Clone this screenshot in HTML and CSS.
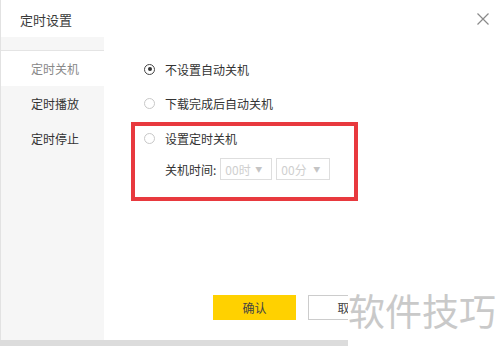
FILE: index.html
```html
<!DOCTYPE html>
<html lang="zh">
<head>
<meta charset="utf-8">
<link rel="stylesheet" href="styles.css">
</head>
<body>
<div class="dialog">
  <div class="header">
    <span class="title">定时设置</span>
    <svg class="close" width="12" height="12" viewBox="0 0 12 12"><path d="M0.5 0.5L11.5 11.5M11.5 0.5L0.5 11.5" stroke="#8a8a8a" stroke-width="1.2" fill="none"/></svg>
  </div>
  <div class="main">
    <div class="sidebar">
      <div class="nav">
        <div class="nav-item active">定时关机</div>
        <div class="nav-item">定时播放</div>
        <div class="nav-item">定时停止</div>
      </div>
    </div>
    <div class="content">
      <div class="option"><span class="radio checked"></span><span>不设置自动关机</span></div>
      <div class="option second"><span class="radio"></span><span>下载完成后自动关机</span></div>
      <div class="highlight">
        <div class="option"><span class="radio"></span><span>设置定时关机</span></div>
        <div class="time-row">
          <span class="label">关机时间:</span>
          <span class="select s1"><span>00时</span><span class="arrow">▼</span></span>
          <span class="select s2"><span>00分</span><span class="arrow">▼</span></span>
        </div>
      </div>
      <div class="footer">
        <button class="btn confirm">确认</button>
        <button class="btn cancel">取消</button>
      </div>
    </div>
  </div>
</div>
<div class="watermark">软件技巧</div>
</body>
</html>
```
FILE: styles.css
```css
html, body {
  margin: 0;
  padding: 0;
}
body {
  width: 500px;
  height: 346px;
  background: #dcdcdc;
  font-family: "Microsoft YaHei", "Noto Sans CJK SC", "Noto Sans", sans-serif;
  font-size: 12px;
  color: #333;
  overflow: hidden;
  position: relative;
}
.dialog {
  width: 499px;
  height: 340px;
  background: #fff;
  border-left: 1px solid #e2e2e2;
  display: flex;
  flex-direction: column;
}
.header {
  height: 37px;
  display: flex;
  align-items: center;
  justify-content: space-between;
  padding: 0 11px 0 19px;
  flex: none;
}
.title {
  font-size: 13px;
  color: #3a3a3a;
  margin-top: 1px;
}
.close {
  display: block;
}
.main {
  flex: 1;
  display: flex;
}
.sidebar {
  width: 103px;
  background: #f6f6f6;
  padding-top: 13px;
  flex: none;
}
.nav {
  border-top: 1px solid #e4e4e4;
}
.nav-item {
  height: 35px;
  line-height: 35px;
  padding-left: 30px;
  font-size: 12px;
  color: #333;
}
.nav-item.active {
  background: #fff;
  color: #888;
}
.content {
  flex: 1;
  display: flex;
  flex-direction: column;
  padding: 22px 0 20px 40px;
}
.option {
  height: 20px;
  display: flex;
  align-items: center;
  gap: 10px;
  color: #333;
}
.option.second {
  margin-top: 14px;
}
.radio {
  width: 9px;
  height: 9px;
  border: 1px solid #c8c8c8;
  border-radius: 50%;
  display: flex;
  align-items: center;
  justify-content: center;
  flex: none;
}
.radio.checked {
  border-color: #444;
}
.radio.checked::after {
  content: "";
  width: 4px;
  height: 4px;
  border-radius: 50%;
  background: #333;
}
.highlight {
  margin: 9px 0 0 -13px;
  width: 210px;
  border: 4px solid #e8393e;
  padding: 2px 0 17px 9px;
}
.time-row {
  margin-top: 10px;
  display: flex;
  align-items: center;
  padding-left: 21px;
}
.label {
  color: #333;
  margin-right: 4px;
}
.select {
  height: 20px;
  border: 1px solid #dedede;
  display: flex;
  align-items: center;
  justify-content: space-between;
  padding: 0 9px 0 4px;
  color: #cfcfcf;
  font-size: 12px;
}
.s1 { width: 37px; }
.s2 { width: 39px; margin-left: 4px; }
.arrow {
  font-size: 7px;
  color: #c4c4c4;
}
.footer {
  margin-top: auto;
  display: flex;
  gap: 12px;
  padding-left: 69px;
}
.btn {
  width: 83px;
  height: 25px;
  font-family: inherit;
  font-size: 12px;
  border-radius: 0;
  padding: 0;
}
.confirm {
  background: #ffd100;
  border: none;
  color: #444;
}
.cancel {
  background: #fff;
  border: 1px solid #ccc;
  color: #444;
}
.watermark {
  position: absolute;
  left: 348px;
  top: 284px;
  width: 152px;
  height: 62px;
  background: #fff;
  color: #c9c9c9;
  font-family: "Noto Sans CJK SC", sans-serif;
  font-size: 37px;
  line-height: 52px;
  white-space: nowrap;
  overflow: hidden;
}
```
